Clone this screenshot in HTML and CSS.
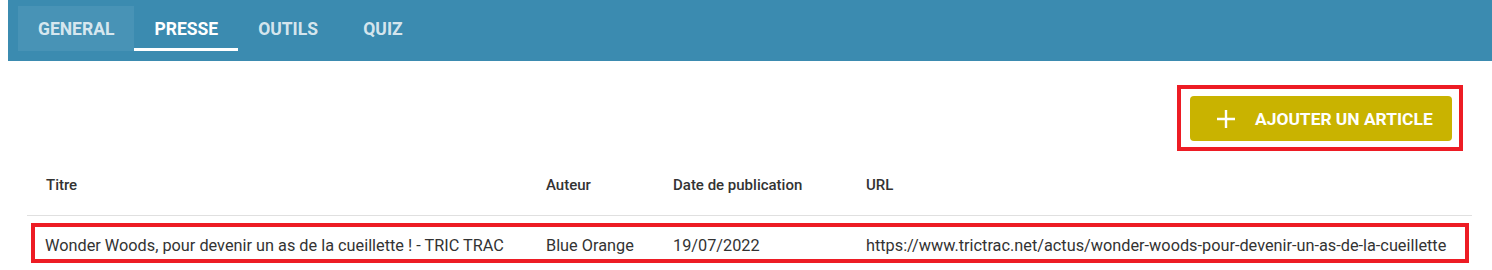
FILE: index.html
```html
<!DOCTYPE html>
<html lang="fr">
<head>
<meta charset="utf-8">
<title>Presse</title>
<link rel="stylesheet" href="styles.css">
</head>
<body>
<div class="page">
  <header class="topbar">
    <nav class="tabs">
      <a class="tab tab-hover">GENERAL</a>
      <a class="tab tab-active">PRESSE</a>
      <a class="tab">OUTILS</a>
      <a class="tab">QUIZ</a>
    </nav>
  </header>
  <main class="content">
    <div class="toolbar">
      <div class="mark mark-btn">
        <button class="add-btn">
          <svg class="plus" width="20" height="20" viewBox="0 0 20 20"><path d="M10 1v18M1 10h18" stroke="#fff" stroke-width="2.4" fill="none"/></svg>
          <span>AJOUTER UN ARTICLE</span>
        </button>
      </div>
    </div>
    <div class="table">
      <div class="thead">
        <div class="cell c-title">Titre</div>
        <div class="cell c-author">Auteur</div>
        <div class="cell c-date">Date de publication</div>
        <div class="cell c-url">URL</div>
      </div>
      <div class="mark mark-row">
        <div class="trow">
          <div class="cell c-title">Wonder Woods, pour devenir un as de la cueillette ! - TRIC TRAC</div>
          <div class="cell c-author">Blue Orange</div>
          <div class="cell c-date">19/07/2022</div>
          <div class="cell c-url">https://www.trictrac.net/actus/wonder-woods-pour-devenir-un-as-de-la-cueillette</div>
        </div>
      </div>
    </div>
  </main>
</div>
</body>
</html>
```
FILE: styles.css
```css
* { box-sizing: border-box; }
html, body { margin: 0; padding: 0; background: #fff; }
body { font-family: Roboto, "Liberation Sans", Arial, sans-serif; color: #333; }
.page { padding-left: 8px; }

.topbar {
  height: 61px;
  background: #3b8bb0;
  padding: 6px 0 0 10px;
}
.tabs { display: flex; height: 45px; }
.tab {
  display: flex;
  align-items: center;
  justify-content: center;
  min-width: 90px;
  padding: 0 20px;
  height: 45px;
  font-size: 17.5px;
  font-weight: 700;
  color: rgba(255,255,255,0.8);
}
.tab-hover { background: #4893b6; }
.tab-active { color: #fff; box-shadow: inset 0 -3px 0 #fff; }

.content { padding: 0 20px 0 19px; }
.toolbar { display: flex; justify-content: flex-end; padding-top: 24px; padding-right: 9px; }

.mark { border: 4px solid #ed1c24; }
.mark-btn { padding: 7px 7px 6px 9px; }
.add-btn {
  display: flex;
  align-items: center;
  width: 262px;
  height: 45px;
  border: 0;
  border-radius: 4px;
  background: #c9b300;
  color: #fff;
  font-family: Roboto, "Liberation Sans", Arial, sans-serif;
  font-size: 17.4px;
  font-weight: 700;
  padding: 0 0 0 26px;
  gap: 19px;
}
.plus { flex: none; }

.thead {
  display: flex;
  height: 65px;
  padding-top: 22px;
  border-bottom: 1px solid #e0e0e0;
  font-size: 15px;
  font-weight: 500;
  line-height: 24px;
  color: #333;
}
.mark-row { margin: 7px 3px 0 4px; }
.trow {
  display: flex;
  height: 32px;
  padding-top: 7px;
  font-size: 16.3px;
  line-height: 24px;
  color: #333;
}
.cell { white-space: nowrap; }
.thead .c-title { width: 519px; padding-left: 19px; }
.trow .c-title { width: 511px; padding-left: 10px; }
.c-author { width: 127px; }
.c-date { width: 193px; }
.c-url { flex: 1; }
```
